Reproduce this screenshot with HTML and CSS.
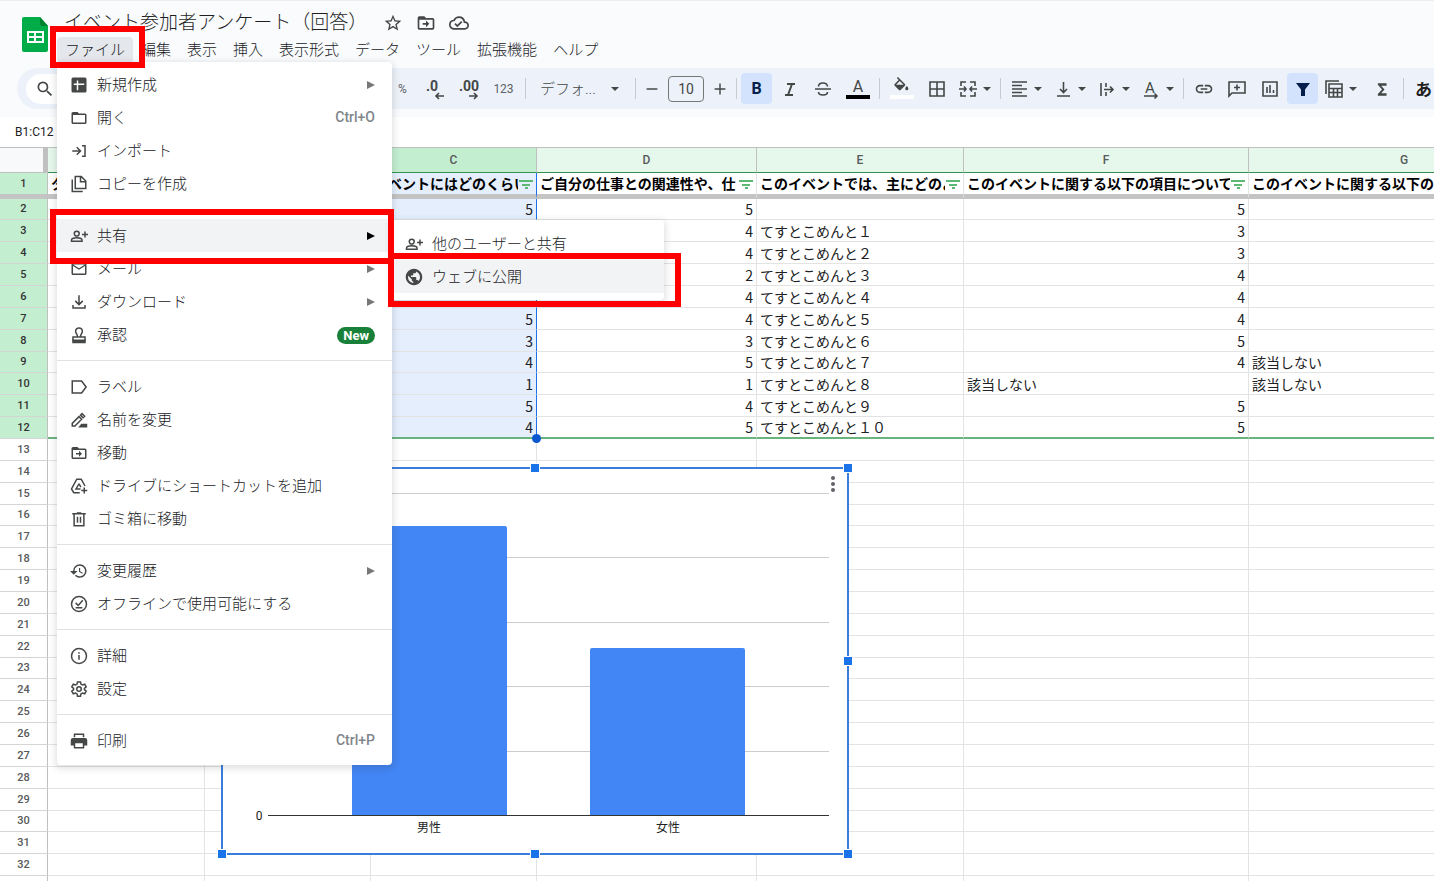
FILE: index.html
```html
<!DOCTYPE html>
<html lang="ja">
<head>
    <meta charset="UTF-8">
    <title>イベント参加者アンケート（回答）</title>
    <link rel="stylesheet" href="styles.css">
</head>
<body>

<!-- icons -->
<svg class="sprite" aria-hidden="true">
    <symbol id="i-search" viewBox="0 0 24 24"><path d="M15.5 14h-.79l-.28-.27A6.471 6.471 0 0 0 16 9.5 6.5 6.5 0 1 0 9.5 16c1.61 0 3.09-.59 4.23-1.57l.27.28v.79l5 4.99L20.49 19l-4.99-5zm-6 0C7.01 14 5 11.99 5 9.5S7.01 5 9.5 5 14 7.01 14 9.5 11.99 14 9.5 14z"/></symbol>
    <symbol id="i-star" viewBox="0 0 24 24"><path d="M22 9.24l-7.19-.62L12 2 9.19 8.63 2 9.24l5.46 4.73L5.82 21 12 17.27 18.18 21l-1.63-7.03L22 9.24zM12 15.4l-3.76 2.27 1-4.28-3.32-2.88 4.38-.38L12 6.1l1.71 4.04 4.38.38-3.32 2.88 1 4.28L12 15.4z"/></symbol>
    <symbol id="i-move" viewBox="0 0 24 24"><path d="M20 6h-8l-2-2H4a2 2 0 0 0-2 2v12a2 2 0 0 0 2 2h16a2 2 0 0 0 2-2V8a2 2 0 0 0-2-2zm0 12H4V8h16v10zM12 17l4-4-4-4v3H8v2h4z"/></symbol>
    <symbol id="i-cloud" viewBox="0 0 24 24"><path d="M19.35 10.04A7.49 7.49 0 0 0 12 4C9.11 4 6.6 5.64 5.35 8.04A5.994 5.994 0 0 0 0 14c0 3.31 2.69 6 6 6h13c2.76 0 5-2.24 5-5 0-2.64-2.05-4.78-4.65-4.96zM19 18H6c-2.21 0-4-1.79-4-4 0-2.05 1.53-3.76 3.56-3.97l1.07-.11.5-.95A5.469 5.469 0 0 1 12 6c2.62 0 4.88 1.86 5.39 4.43l.3 1.5 1.53.11A2.98 2.98 0 0 1 22 15c0 1.65-1.35 3-3 3zm-9-3.82l-2.09-2.09L6.5 13.5 10 17l6.01-6.01-1.41-1.41z"/></symbol>
    <symbol id="i-new" viewBox="0 0 24 24"><path d="M4 2h16a2 2 0 0 1 2 2v16a2 2 0 0 1-2 2H4a2 2 0 0 1-2-2V4a2 2 0 0 1 2-2zm5 4v4H5v2h4v7h2v-7h8v-2h-8V6z"/></symbol>
    <symbol id="i-folder" viewBox="0 0 24 24"><path d="M10 4H4a2 2 0 0 0-2 2v12a2 2 0 0 0 2 2h16a2 2 0 0 0 2-2V8a2 2 0 0 0-2-2h-8l-2-2zm10 14H4V8h16v10z"/></symbol>
    <symbol id="i-import" viewBox="0 0 24 24"><path class="line" d="M3 12h11M9 7l5 5-5 5M16 5h4v14h-4"/></symbol>
    <symbol id="i-copy" viewBox="0 0 24 24"><path class="line" d="M7 2h8l6 6v10H7zM14 2v7h7M3 6v16h14"/></symbol>
    <symbol id="i-person" viewBox="0 0 24 24"><path class="line" d="M9 5.500a3.300 3.300 0 1 1 0 6.600 3.300 3.300 0 0 1 0-6.600zM2 19v-1.600c0-2 3.700-3.200 7-3.200s7 1.200 7 3.200V19zM20 6v8M16 10h8"/></symbol>
    <symbol id="i-mail" viewBox="0 0 24 24"><path d="M20 4H4a2 2 0 0 0-2 2v12a2 2 0 0 0 2 2h16a2 2 0 0 0 2-2V6a2 2 0 0 0-2-2zm0 14H4V8l8 5 8-5v10zm-8-7L4 6h16l-8 5z"/></symbol>
    <symbol id="i-download" viewBox="0 0 24 24"><path class="line" d="M12 3v12M7 10.500l5 5 5-5M4 16v4h16v-4"/></symbol>
    <symbol id="i-approve" viewBox="0 0 24 24"><path class="line" d="M10 14c0-3-2.500-4-2.500-7a4.500 4.500 0 0 1 9 0c0 3-2.500 4-2.500 7M4 20v-5.500h16V20"/><path d="M3 18h18v5H3z"/></symbol>
    <symbol id="i-label" viewBox="0 0 24 24"><path class="line" d="M3 4h12.500l6 8-6 8H3z"/></symbol>
    <symbol id="i-rename" viewBox="0 0 24 24"><path class="line" d="M3 20v-3.500l9-9 3.500 3.500-9 9zM14 5.500l3.500 3.500 2-2L16 3.500z"/><path d="M15 17h8v5H11z"/></symbol>
    <symbol id="i-drive" viewBox="0 0 24 24"><path class="line" d="M13 21H5l-3-5L9 3h6l5 9M12 9l-4 7h6M12 9l2.500 4.500M19 14v8M15 18h8"/></symbol>
    <symbol id="i-trash" viewBox="0 0 24 24"><path class="line" d="M3 5h18M9 4h6M5.500 5v16h13V5M10 9v8M14 9v8"/></symbol>
    <symbol id="i-history" viewBox="0 0 24 24"><path d="M13 3a9 9 0 0 0-9 9H0l5 5 5-5H6a7 7 0 1 1 2.050 4.950l-1.420 1.420A9 9 0 1 0 13 3zm-1 5v5l4.280 2.540.72-1.210-3.500-2.080V8z"/></symbol>
    <symbol id="i-offline" viewBox="0 0 24 24"><circle class="line" cx="12" cy="12" r="10"/><path class="line" d="M7.500 10.500l3.500 3.500 6-7M7.500 17h9"/></symbol>
    <symbol id="i-info" viewBox="0 0 24 24"><circle class="line" cx="12" cy="12" r="10"/><path d="M11 10.500h2V17h-2zM11 7h2v2h-2z"/></symbol>
    <symbol id="i-gear" viewBox="0 0 24 24"><path class="line" d="M10 2.500h4l.6 3 2 1.200 3-1 2 3.500-2.400 2v1.600l2.400 2-2 3.500-3-1-2 1.200-.6 3h-4l-.6-3-2-1.200-3 1-2-3.500 2.400-2v-1.600l-2.400-2 2-3.500 3 1 2-1.200z"/><circle class="line" cx="12" cy="12" r="3"/></symbol>
    <symbol id="i-print" viewBox="0 0 24 24"><path d="M20 8H4a3 3 0 0 0-3 3v7h4v4h14v-4h4v-7a3 3 0 0 0-3-3zm-3 12H7v-5h10zM5 2h14v5h-2V4H7v3H5z"/></symbol>
    <symbol id="i-globe" viewBox="0 0 24 24"><path d="M12 1C5.900 1 1 5.900 1 12s4.900 11 11 11 11-4.900 11-11S18.100 1 12 1zm-1 18.930c-3.950-.49-7-3.850-7-7.930 0-.62.08-1.210.21-1.790L9 15v1c0 1.100.9 2 2 2v1.930zm6.900-2.540c-.26-.81-1-1.390-1.900-1.390h-1v-3c0-.55-.45-1-1-1H8v-2h2c.55 0 1-.45 1-1V7h2c1.100 0 2-.9 2-2v-.41c2.930 1.190 5 4.060 5 7.410 0 2.080-.8 3.970-2.100 5.390z"/></symbol>
    <symbol id="i-filter-row" viewBox="0 0 14 10"><path d="M0 1h14v2H0zM3 5h8v2H3zM6 8h3v2H6z"/></symbol>
    <symbol id="i-arrow" viewBox="0 0 8 4"><path d="M0 0h8L4 4z"/></symbol>
</svg>

<header class="header">
    <svg class="logo" viewBox="0 0 26 35" role="img" aria-label="スプレッドシート">
        <path fill="#00ac47" d="M2 0h16l8 9v24a2 2 0 0 1-2 2H2a2 2 0 0 1-2-2V2a2 2 0 0 1 2-2z"/>
        <path fill="#00832d" d="M18 0l8 9h-6a2 2 0 0 1-2-2z"/>
        <path fill="#fff" fill-rule="evenodd" d="M5 14h17v12H5zM7 16v3h5v-3zM14 16v3h6v-3zM7 21v3h5v-3zM14 21v3h6v-3z"/>
    </svg>
    <div class="header-main">
        <div class="title-row">
            <h1 class="title">イベント参加者アンケート（回答）</h1>
            <button class="title-btn" aria-label="スター"><svg><use href="#i-star"/></svg></button>
            <button class="title-btn" aria-label="移動"><svg><use href="#i-move"/></svg></button>
            <button class="title-btn" aria-label="保存済み"><svg><use href="#i-cloud"/></svg></button>
        </div>
        <nav class="menubar">
            <button class="active">ファイル</button>
            <button>編集</button>
            <button>表示</button>
            <button>挿入</button>
            <button>表示形式</button>
            <button>データ</button>
            <button>ツール</button>
            <button>拡張機能</button>
            <button>ヘルプ</button>
        </nav>
    </div>
</header>

<div class="toolbar">
    <button class="search" aria-label="メニューを検索"><svg><use href="#i-search"/></svg></button>
    <button class="tb small">%</button>
    <button class="tb" aria-label="小数点以下の桁数を減らす">
        <svg viewBox="0 0 20 20"><text x="0" y="12" class="dec">.0</text><path class="line" d="M18 17h-8M13 14l-3 3 3 3"/></svg>
    </button>
    <button class="tb" aria-label="小数点以下の桁数を増やす">
        <svg viewBox="0 0 20 20"><text x="0" y="12" class="dec">.00</text><path class="line" d="M10 17h8M15 14l3 3-3 3"/></svg>
    </button>
    <button class="tb wide small">123</button>
    <span class="sep"></span>
    <span class="font-box">
        <select class="font" aria-label="フォント"><option>デフォ...</option></select>
        <svg class="arrow"><use href="#i-arrow"/></svg>
    </span>
    <span class="sep"></span>
    <button class="tb step" aria-label="縮小"><svg viewBox="0 0 20 20"><path class="line" d="M4 10h12"/></svg></button>
    <input class="size" type="text" value="10" aria-label="フォントサイズ">
    <button class="tb step" aria-label="拡大"><svg viewBox="0 0 20 20"><path class="line" d="M4 10h12M10 4v12"/></svg></button>
    <span class="sep"></span>
    <button class="tb on bold">B</button>
    <button class="tb" aria-label="斜体"><svg viewBox="0 0 20 20"><path class="thick" d="M7 5h8M5 16h8M12 5L8 16"/></svg></button>
    <button class="tb" aria-label="取り消し線"><svg viewBox="0 0 20 20"><path class="line" d="M2 10h16M14.500 7.500C14.500 5 12.500 4 10 4S5.500 5 5.500 7.500M5.500 13c0 2 2 3 4.500 3s4.500-1 4.500-3"/></svg></button>
    <button class="tb wide color" aria-label="テキストの色"><svg viewBox="0 0 24 20"><text x="12" y="13" text-anchor="middle" class="letter">A</text><path fill="#000" d="M0 16h24v4H0z"/></svg></button>
    <span class="sep"></span>
    <button class="tb wide color" aria-label="塗りつぶしの色"><svg viewBox="0 0 24 20"><g transform="translate(2 -2) scale(.78)"><path d="M16.560 8.940L7.620 0 6.210 1.410l2.380 2.380-5.150 5.150a1.490 1.490 0 0 0 0 2.120l5.500 5.500c.29.29.68.44 1.060.44s.77-.15 1.060-.44l5.500-5.500c.59-.58.59-1.530 0-2.120zM5.210 10L10 5.210 14.790 10zM19 11.500s-2 2.170-2 3.500a2 2 0 0 0 4 0c0-1.330-2-3.500-2-3.500z"/></g><path fill="#fff" d="M0 16h24v4H0z"/></svg></button>
    <button class="tb" aria-label="枠線"><svg viewBox="0 0 20 20"><path class="line" d="M3 3h14v14H3zM10 3v14M3 10h14"/></svg></button>
    <button class="tb drop" aria-label="セルを結合"><svg viewBox="0 0 20 20"><path class="line" d="M8 3H3v4M12 3h5v4M8 17H3v-4M12 17h5v-4M1 10h7M19 10h-7M6 7.500L8 10l-2 2.500M14 7.500L12 10l2 2.500"/></svg><svg class="arrow"><use href="#i-arrow"/></svg></button>
    <span class="sep"></span>
    <button class="tb drop" aria-label="水平方向の配置"><svg viewBox="0 0 20 20"><path class="line" d="M3 3h15M3 6.500h10M3 10h15M3 13.500h10M3 17h15"/></svg><svg class="arrow"><use href="#i-arrow"/></svg></button>
    <button class="tb drop" aria-label="垂直方向の配置"><svg viewBox="0 0 20 20"><path class="line" d="M4 17h13M10.500 3v10M7 10l3.500 3.500L14 10"/></svg><svg class="arrow"><use href="#i-arrow"/></svg></button>
    <button class="tb drop" aria-label="折り返し"><svg viewBox="0 0 20 20"><path class="line" d="M4 4v13M9 4v4M9 13v4M7 10.500h9M13 7.500l3 3-3 3"/></svg><svg class="arrow"><use href="#i-arrow"/></svg></button>
    <button class="tb drop" aria-label="回転"><svg viewBox="0 0 20 20"><text x="9" y="14" text-anchor="middle" class="rotate">A</text><path class="line" d="M3 17h13M13.500 14.500L16 17l-2.500 2.500"/></svg><svg class="arrow"><use href="#i-arrow"/></svg></button>
    <span class="sep"></span>
    <button class="tb" aria-label="リンク"><svg viewBox="0 0 24 24"><path d="M3.900 12c0-1.710 1.390-3.100 3.100-3.100h4V7H7c-2.760 0-5 2.240-5 5s2.240 5 5 5h4v-1.900H7c-1.710 0-3.100-1.390-3.100-3.100zM8 13h8v-2H8v2zm9-6h-4v1.900h4c1.710 0 3.100 1.390 3.100 3.100s-1.390 3.100-3.100 3.100h-4V17h4c2.760 0 5-2.240 5-5s-2.240-5-5-5z"/></svg></button>
    <button class="tb" aria-label="コメント"><svg viewBox="0 0 20 20"><path class="line" d="M2 17V3h16v11H5zM10 5.500v6M7 8.500h6"/></svg></button>
    <button class="tb" aria-label="グラフ"><svg viewBox="0 0 20 20"><path class="line" d="M3 3h14v14H3zM7 8v6M10 6v8M13.500 11v3"/></svg></button>
    <button class="tb on" aria-label="フィルタ"><svg viewBox="0 0 20 20"><path d="M3 4h14l-5 6.500V17H8v-6.500z"/></svg></button>
    <button class="tb drop" aria-label="フィルタ表示"><svg viewBox="0 0 20 20"><path class="line" d="M2 15V2h13M5 5h13v13H5zM5 9.500h13M5 13.500h13M9.500 9.500V18M13.500 9.500V18"/></svg><svg class="arrow"><use href="#i-arrow"/></svg></button>
    <button class="tb wide" aria-label="関数"><svg viewBox="0 0 24 24"><path d="M17.500 5H7v2l5 5.500L7 18v2h10.500v-3H11l4-4.500L11 8h6.500z"/></svg></button>
    <span class="sep"></span>
    <button class="tb ime">あ</button>
</div>

<div class="formula-bar">
    <input class="name-box" type="text" value="B1:C12" aria-label="名前ボックス">
</div>

<main class="sheet">
    <table class="grid">
        <colgroup>
            <col class="c-head"><col class="c-a"><col class="c-b"><col class="c-b"><col class="c-d"><col class="c-e"><col class="c-f"><col class="c-g">
        </colgroup>
        <thead>
            <tr><th class="corner"></th><th>A</th><th class="sel">B</th><th class="sel">C</th><th>D</th><th>E</th><th>F</th><th>G</th></tr>
        </thead>
        <tbody class="frozen">
            <tr>
                <th>1</th>
                <td><div class="field"><span>タイムスタンプ</span></div></td>
                <td></td>
                <td><div class="field"><span>イベントにはどのくらい</span><button aria-label="フィルタ"><svg><use href="#i-filter-row"/></svg></button></div></td>
                <td><div class="field"><span>ご自分の仕事との関連性や、仕</span><button aria-label="フィルタ"><svg><use href="#i-filter-row"/></svg></button></div></td>
                <td><div class="field"><span>このイベントでは、主にどのよ</span><button aria-label="フィルタ"><svg><use href="#i-filter-row"/></svg></button></div></td>
                <td><div class="field"><span>このイベントに関する以下の項目について</span><button aria-label="フィルタ"><svg><use href="#i-filter-row"/></svg></button></div></td>
                <td><div class="field"><span>このイベントに関する以下の項目について</span></div></td>
            </tr>
        </tbody>
        <tbody class="rows">
            <tr class="data"><th>2</th><td></td><td></td><td>5</td><td>5</td><td></td><td>5</td><td></td></tr>
            <tr class="data"><th>3</th><td></td><td></td><td></td><td>4</td><td class="text">てすとこめんと１</td><td>3</td><td></td></tr>
            <tr class="data"><th>4</th><td></td><td></td><td></td><td>4</td><td class="text">てすとこめんと２</td><td>3</td><td></td></tr>
            <tr class="data"><th>5</th><td></td><td></td><td></td><td>2</td><td class="text">てすとこめんと３</td><td>4</td><td></td></tr>
            <tr class="data"><th>6</th><td></td><td></td><td></td><td>4</td><td class="text">てすとこめんと４</td><td>4</td><td></td></tr>
            <tr class="data"><th>7</th><td></td><td></td><td>5</td><td>4</td><td class="text">てすとこめんと５</td><td>4</td><td></td></tr>
            <tr class="data"><th>8</th><td></td><td></td><td>3</td><td>3</td><td class="text">てすとこめんと６</td><td>5</td><td></td></tr>
            <tr class="data"><th>9</th><td></td><td></td><td>4</td><td>5</td><td class="text">てすとこめんと７</td><td>4</td><td class="text">該当しない</td></tr>
            <tr class="data"><th>10</th><td></td><td></td><td>1</td><td>1</td><td class="text">てすとこめんと８</td><td class="text">該当しない</td><td class="text">該当しない</td></tr>
            <tr class="data"><th>11</th><td></td><td></td><td>5</td><td>4</td><td class="text">てすとこめんと９</td><td>5</td><td></td></tr>
            <tr class="data last"><th>12</th><td></td><td></td><td class="handle-cell">4<i class="handle"></i></td><td>5</td><td class="text">てすとこめんと１０</td><td>5</td><td></td></tr>
            <tr><th>13</th><td></td><td></td><td></td><td></td><td></td><td></td><td></td></tr>
            <tr><th>14</th><td></td><td></td><td></td><td></td><td></td><td></td><td></td></tr>
            <tr><th>15</th><td></td><td></td><td></td><td></td><td></td><td></td><td></td></tr>
            <tr><th>16</th><td></td><td></td><td></td><td></td><td></td><td></td><td></td></tr>
            <tr><th>17</th><td></td><td></td><td></td><td></td><td></td><td></td><td></td></tr>
            <tr><th>18</th><td></td><td></td><td></td><td></td><td></td><td></td><td></td></tr>
            <tr><th>19</th><td></td><td></td><td></td><td></td><td></td><td></td><td></td></tr>
            <tr><th>20</th><td></td><td></td><td></td><td></td><td></td><td></td><td></td></tr>
            <tr><th>21</th><td></td><td></td><td></td><td></td><td></td><td></td><td></td></tr>
            <tr><th>22</th><td></td><td></td><td></td><td></td><td></td><td></td><td></td></tr>
            <tr><th>23</th><td></td><td></td><td></td><td></td><td></td><td></td><td></td></tr>
            <tr><th>24</th><td></td><td></td><td></td><td></td><td></td><td></td><td></td></tr>
            <tr><th>25</th><td></td><td></td><td></td><td></td><td></td><td></td><td></td></tr>
            <tr><th>26</th><td></td><td></td><td></td><td></td><td></td><td></td><td></td></tr>
            <tr><th>27</th><td></td><td></td><td></td><td></td><td></td><td></td><td></td></tr>
            <tr><th>28</th><td></td><td></td><td></td><td></td><td></td><td></td><td></td></tr>
            <tr><th>29</th><td></td><td></td><td></td><td></td><td></td><td></td><td></td></tr>
            <tr><th>30</th><td></td><td></td><td></td><td></td><td></td><td></td><td></td></tr>
            <tr><th>31</th><td></td><td></td><td></td><td></td><td></td><td></td><td></td></tr>
            <tr><th>32</th><td></td><td></td><td></td><td></td><td></td><td></td><td></td></tr>
            <tr><th></th><td></td><td></td><td></td><td></td><td></td><td></td><td></td></tr>
        </tbody>
    </table>

    <!-- floating chart -->
    <svg class="chart" viewBox="-5 -5 638 398">
        <rect x="1" y="1" width="626" height="386" fill="#fff" stroke="#3b7ddd" stroke-width="2"/>
        <path stroke="#ccc" fill="none" d="M47 26.500h561M47 90.500h561M47 155.500h561M47 219.500h561M47 284.500h561"/>
        <path fill="#4285f4" d="M131 349V61a2 2 0 0 1 2-2h151a2 2 0 0 1 2 2v288zM369 349V183a2 2 0 0 1 2-2h151a2 2 0 0 1 2 2v166z"/>
        <path stroke="#333" fill="none" d="M47 348.500h561"/>
        <g class="chart-text">
            <text x="38" y="353">0</text>
            <text x="208" y="365">男性</text>
            <text x="447" y="365">女性</text>
        </g>
        <g fill="#5f6368"><circle cx="612" cy="11" r="2"/><circle cx="612" cy="17" r="2"/><circle cx="612" cy="23" r="2"/></g>
        <path fill="#1a73e8" stroke="#fff" d="M-3.500-3.500h9v9h-9zM309.500-3.500h9v9h-9zM622.500-3.500h9v9h-9zM-3.500 189.500h9v9h-9zM622.500 189.500h9v9h-9zM-3.500 382.500h9v9h-9zM309.500 382.500h9v9h-9zM622.500 382.500h9v9h-9z"/>
    </svg>
</main>

<!-- file menu -->
<div class="menu file-menu">
    <button><svg><use href="#i-new"/></svg>新規作成<i class="more"></i></button>
    <button><svg><use href="#i-folder"/></svg>開く<kbd>Ctrl+O</kbd></button>
    <button><svg><use href="#i-import"/></svg>インポート</button>
    <button><svg><use href="#i-copy"/></svg>コピーを作成</button>
    <hr>
    <button class="hover"><svg><use href="#i-person"/></svg>共有<i class="more"></i></button>
    <button><svg><use href="#i-mail"/></svg>メール<i class="more"></i></button>
    <button><svg><use href="#i-download"/></svg>ダウンロード<i class="more"></i></button>
    <button><svg><use href="#i-approve"/></svg>承認<span class="new">New</span></button>
    <hr>
    <button><svg><use href="#i-label"/></svg>ラベル</button>
    <button><svg><use href="#i-rename"/></svg>名前を変更</button>
    <button><svg><use href="#i-move"/></svg>移動</button>
    <button><svg><use href="#i-drive"/></svg>ドライブにショートカットを追加</button>
    <button><svg><use href="#i-trash"/></svg>ゴミ箱に移動</button>
    <hr>
    <button><svg><use href="#i-history"/></svg>変更履歴<i class="more"></i></button>
    <button><svg><use href="#i-offline"/></svg>オフラインで使用可能にする</button>
    <hr>
    <button><svg><use href="#i-info"/></svg>詳細</button>
    <button><svg><use href="#i-gear"/></svg>設定</button>
    <hr>
    <button><svg><use href="#i-print"/></svg>印刷<kbd>Ctrl+P</kbd></button>
</div>

<div class="menu sub-menu">
    <button><svg><use href="#i-person"/></svg>他のユーザーと共有</button>
    <button class="hover"><svg><use href="#i-globe"/></svg>ウェブに公開</button>
</div>

<!-- red frames over the steps -->
<div class="mark mark-file"></div>
<div class="mark mark-share"></div>
<div class="mark mark-publish"></div>

</body>
</html>
```
FILE: styles.css
```css
*{
    margin: 0;
    padding: 0;
    box-sizing: border-box;
}
body{
    display: flex;
    flex-direction: column;
    height: 100vh;
    overflow: hidden;
    position: relative;
    background-color: #f9fbfd;
    color: #3c4043;
    font-family: Roboto, "Noto Sans CJK JP", sans-serif;
    font-size: 15px;
}
button,input,select{
    border: none;
    background: none;
    color: inherit;
    font: inherit;
}
svg{
    fill: currentColor;
}
.sprite{
    position: absolute;
    width: 0;
    height: 0;
}
.line,.thick{
    fill: none;
    stroke: currentColor;
    stroke-width: 2;
}
.toolbar .line{
    stroke-width: 1.6;
}

/* header */
.header{
    display: flex;
    flex: none;
    height: 68px;
    border-top: 1px solid #eceef1;
}
.logo{
    width: 26px;
    height: 35px;
    margin: 16px 9px 0 22px;
}
.title-row{
    display: flex;
    align-items: center;
    gap: 13px;
    height: 36px;
    padding: 7px 0 0 7px;
}
.title{
    margin-right: 11px;
    color: #1f1f1f;
    font-size: 19px;
    font-weight: 300;
    line-height: 30px;
    width: 295px;
}
.title-btn{
    width: 20px;
    height: 20px;
    color: #444746;
}
.title-btn svg{
    width: 20px;
    height: 20px;
}
.menubar{
    display: flex;
}
.menubar button{
    height: 26px;
    padding: 0 8px;
    border-radius: 4px;
    color: #202124;
    font-weight: 300;
    line-height: 24px;
}
.menubar .active{
    background-color: #e4e7eb;
}

/* toolbar */
.toolbar{
    display: flex;
    flex: none;
    align-items: center;
    gap: 2px;
    height: 41px;
    margin-left: 17px;
    padding-left: 9px;
    border-radius: 21px 0 0 21px;
    background-color: #edf2fa;
    color: #444746;
    overflow: hidden;
}
.toolbar > *{
    flex: none;
}
.search{
    width: 120px;
    height: 30px;
    margin-right: 239px;
    padding: 5px 9px;
    border-radius: 15px;
    background-color: #fff;
    text-align: left;
}
.search svg{
    width: 20px;
    height: 20px;
}
.tb{
    display: flex;
    align-items: center;
    justify-content: center;
    width: 31px;
    height: 31px;
    border-radius: 4px;
}
.tb svg{
    width: 20px;
    height: 20px;
    overflow: visible;
}
.wide{
    width: 35px;
}
.step{
    width: 24px;
}
.step svg{
    width: 18px;
}
.small{
    color: #5f6368;
    font-size: 12px;
}
.on{
    background-color: #d3e3fd;
    color: #041e49;
}
.bold{
    font-size: 16px;
    font-weight: 700;
}
.ime{
    color: #1f1f1f;
    font-size: 17px;
    font-weight: 700;
}
.dec{
    font-size: 14px;
    font-weight: 700;
}
.letter{
    font-size: 16px;
}
.rotate{
    font-size: 15px;
}
.toolbar .color svg{
    width: 24px;
}
.drop{
    justify-content: flex-start;
    gap: 5px;
    width: 42px;
    padding-left: 4px;
}
.toolbar .arrow{
    width: 8px;
    height: 4px;
}
.sep{
    width: 1px;
    height: 21px;
    margin: 0 2px;
    background-color: #c7cbd1;
}
.font-box{
    display: flex;
    align-items: center;
    width: 101px;
    padding-left: 10px;
}
.font{
    appearance: none;
    width: 71px;
    font-weight: 300;
}
.size{
    width: 36px;
    height: 26px;
    margin: 0 2px;
    border: 1px solid #747775;
    border-radius: 4px;
    font-size: 14px;
    text-align: center;
}

/* name box */
.formula-bar{
    flex: none;
    height: 30px;
    margin-top: 8px;
    background-color: #fff;
}
.name-box{
    width: 100px;
    height: 30px;
    padding-left: 15px;
    color: #202124;
    font-size: 12px;
}

/* sheet */
.sheet{
    flex: 1;
    position: relative;
    min-height: 0;
    overflow: hidden;
    background-color: #fff;
}
.grid{
    width: 1560px;
    border-collapse: separate;
    border-spacing: 0;
    table-layout: fixed;
}
.c-head{ width: 48px; }
.c-a{ width: 157px; }
.c-b{ width: 166px; }
.c-d{ width: 220px; }
.c-e{ width: 207px; }
.c-f{ width: 285px; }
.c-g{ width: 311px; }

.grid th{
    border-right: 1px solid #c0c0c0;
    border-bottom: 1px solid #d5d5d5;
    color: #575a5a;
    font-size: 11px;
    font-weight: 500;
    line-height: 18px;
}
.grid td{
    height: 22px;
    padding: 0 3px;
    border-right: 1px solid #e2e3e3;
    border-bottom: 1px solid #e2e3e3;
    color: #202124;
    font-family: "Noto Sans CJK JP", sans-serif;
    font-size: 14px;
    line-height: 20px;
    text-align: right;
    white-space: nowrap;
}
.grid td.text{
    text-align: left;
}
.grid thead th{
    height: 26px;
    border-top: 1px solid #c0c0c0;
    border-bottom: 1px solid #34914f;
    background-color: #e6f7ec;
    font-size: 12px;
}
.grid thead .sel{
    background-color: #c3eed0;
}
.grid thead .corner{
    border-right: 5px solid #c0c0c0;
    border-bottom-color: #c0c0c0;
    background-color: #f8f9fa;
}
.frozen th,.data th{
    background-color: #c3eed0;
    color: #333;
}
.grid .frozen th,.grid .frozen td{
    height: 26px;
    border-bottom: 5px solid #c4c4c4;
}
/* a row is a little under 22px, so every seventh one is shorter */
.rows tr:nth-child(7n+1) td{
    height: 21px;
    line-height: 19px;
}
.frozen td:nth-child(3),.frozen td:nth-child(4),
.data td:nth-child(3),.data td:nth-child(4){
    background-color: #e4eefd;
}
.grid .frozen td:nth-child(4),.grid .data td:nth-child(4){
    border-right-color: #1a73e8;
}
.grid .last td{
    border-bottom: 2px solid #69b37e;
    line-height: 19px;
}
.handle-cell{
    position: relative;
}
.handle{
    position: absolute;
    right: -5px;
    bottom: -6px;
    width: 9px;
    height: 9px;
    border-radius: 50%;
    background-color: #0b57d0;
}
.field{
    display: flex;
    align-items: center;
    gap: 1px;
    height: 20px;
    line-height: 18px;
}
.field span{
    flex: 1;
    height: 20px;
    overflow: hidden;
    color: #000;
    font-weight: 700;
    text-align: left;
}
.field button{
    display: flex;
    width: 14px;
    color: #5bb974;
}
.field svg{
    width: 14px;
    height: 10px;
}
.chart{
    position: absolute;
    left: 216px;
    top: 315px;
    width: 638px;
    height: 398px;
}
.chart-text{
    fill: #222;
    font-size: 12px;
    text-anchor: middle;
}

/* menus */
.menu{
    position: absolute;
    border-radius: 4px;
    background-color: #fff;
    box-shadow: 0 2px 6px 2px rgba(60, 64, 67, .15);
}
.file-menu{
    left: 57px;
    top: 62px;
    width: 335px;
    padding: 6px 0 8px;
}
.sub-menu{
    left: 392px;
    top: 220px;
    width: 272px;
    padding: 7px 0;
}
.menu button{
    display: flex;
    align-items: center;
    width: 100%;
    height: 33px;
    padding: 0 17px 2px 13px;
    color: #202124;
    font-weight: 300;
    text-align: left;
}
.menu svg{
    width: 18px;
    height: 18px;
    margin: 3px 9px 0 0;
    color: #444746;
}
.menu .hover{
    background-color: #f1f3f4;
}
.menu hr{
    margin: 9px 0;
    border: none;
    border-top: 1px solid #dfe1e5;
}
.menu kbd{
    margin-left: auto;
    color: #80868b;
    font-family: Roboto, sans-serif;
    font-size: 14px;
    font-weight: 500;
}
.more{
    margin: 2px 0 0 auto;
    border: 4px solid transparent;
    border-left: 8px solid #777;
    border-right: none;
}
.hover .more{
    border-left-color: #000;
}
.new{
    margin: 3px 0 0 auto;
    padding: 0 6px;
    border-radius: 9px;
    background-color: #188038;
    color: #fff;
    font-size: 13px;
    font-weight: 700;
    line-height: 17px;
}

.mark{
    position: absolute;
    border: 6px solid #f00;
}
.mark-file{
    left: 50px;
    top: 26px;
    width: 95px;
    height: 42px;
}
.mark-share{
    left: 50px;
    top: 209px;
    width: 344px;
    height: 55px;
}
.mark-publish{
    left: 388px;
    top: 253px;
    width: 293px;
    height: 54px;
}
```
